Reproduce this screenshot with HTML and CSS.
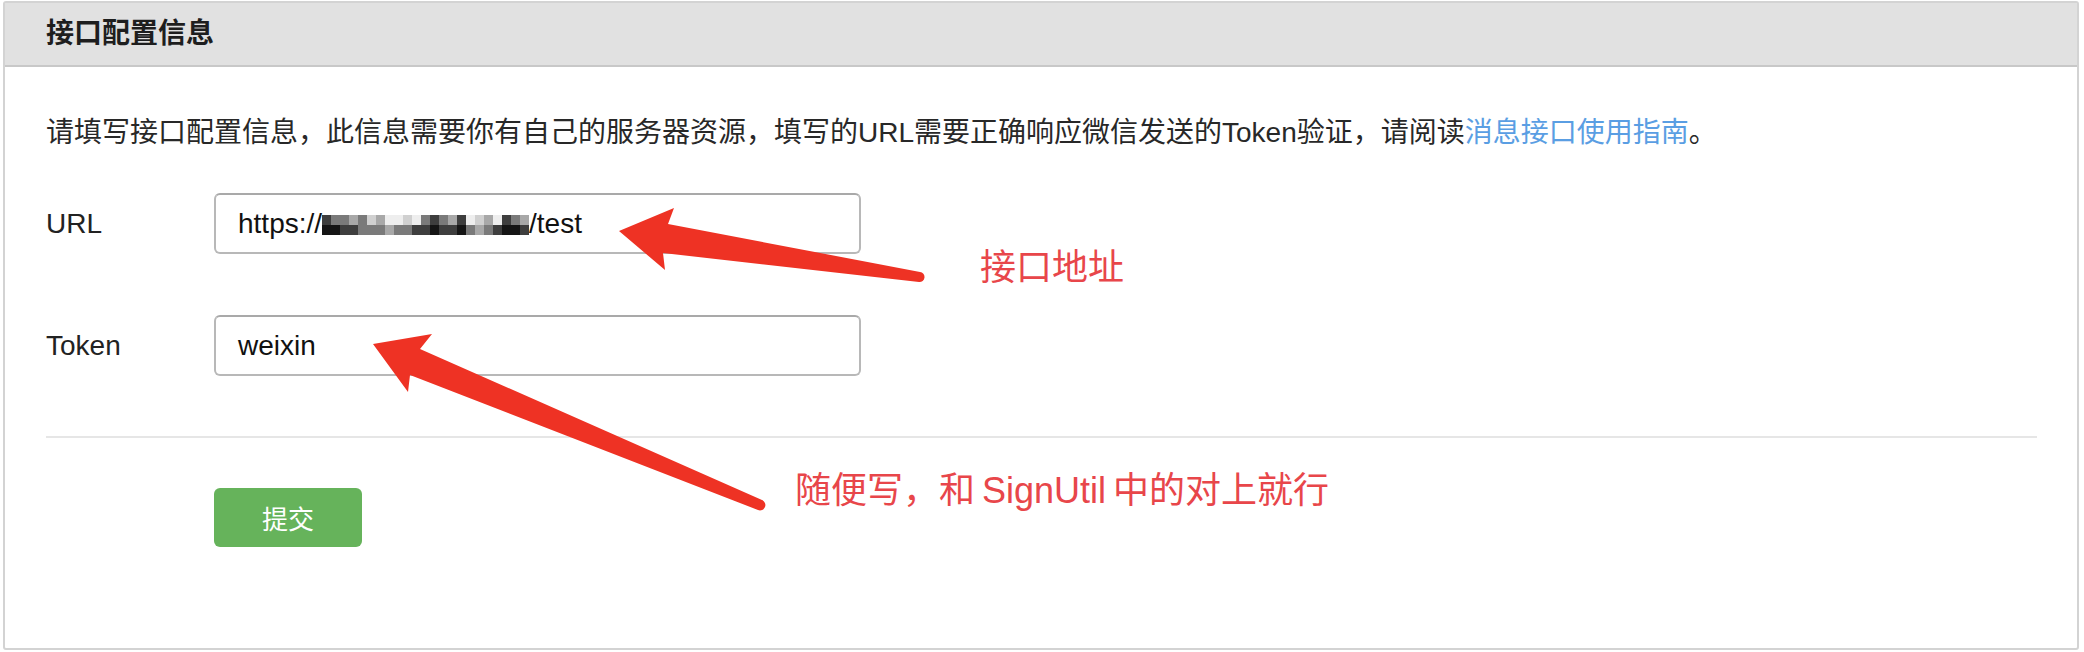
FILE: index.html
```html
<!DOCTYPE html>
<html lang="zh-CN">
<head>
<meta charset="utf-8">
<title>接口配置信息</title>
<link rel="stylesheet" href="styles.css">
</head>
<body>
<div class="panel">
  <div class="panel-head">
    <h2 class="title">接口配置信息</h2>
  </div>
  <div class="panel-body">
    <p class="desc">请填写接口配置信息，此信息需要你有自己的服务器资源，填写的URL需要正确响应微信发送的Token验证，请阅读<a class="link" href="#">消息接口使用指南</a>。</p>
    <div class="form-row">
      <label class="label">URL</label>
      <div class="input">https://<span class="mosaic"><span class="col"><i class="g4"></i><i class="g5"></i></span><span class="col"><i class="g3"></i><i class="g5"></i></span><span class="col"><i class="g3"></i><i class="g4"></i></span><span class="col"><i class="g2"></i><i class="g4"></i></span><span class="col"><i class="g3"></i><i class="g3"></i></span><span class="col"><i class="g1"></i><i class="g3"></i></span><span class="col"><i class="g2"></i><i class="g3"></i></span><span class="col"><i class="g0"></i><i class="g2"></i></span><span class="col"><i class="g0"></i><i class="g3"></i></span><span class="col"><i class="g1"></i><i class="g3"></i></span><span class="col"><i class="g0"></i><i class="g4"></i></span><span class="col"><i class="g3"></i><i class="g4"></i></span><span class="col"><i class="g4"></i><i class="g5"></i></span><span class="col"><i class="g3"></i><i class="g4"></i></span><span class="col"><i class="g2"></i><i class="g4"></i></span><span class="col"><i class="g4"></i><i class="g5"></i></span><span class="col"><i class="g0"></i><i class="g3"></i></span><span class="col"><i class="g1"></i><i class="g2"></i></span><span class="col"><i class="g2"></i><i class="g3"></i></span><span class="col"><i class="g0"></i><i class="g4"></i></span><span class="col"><i class="g4"></i><i class="g5"></i></span><span class="col"><i class="g3"></i><i class="g5"></i></span><span class="col"><i class="g2"></i><i class="g4"></i></span></span>/test</div>
    </div>
    <div class="form-row">
      <label class="label">Token</label>
      <div class="input">weixin</div>
    </div>
    <hr class="divider">
    <div class="actions">
      <button class="btn" type="button">提交</button>
    </div>
  </div>
</div>

<svg class="arrows" width="2084" height="652" viewBox="0 0 2084 652" xmlns="http://www.w3.org/2000/svg">
  <path class="arrow" d="M619,231 L674,208 L668,224 L920,272 A5,5 0 0 1 919,282 L663,253 L665,270 Z"/>
  <path class="arrow" d="M373,344 L432,334 L420,349 L762,500 A5,5 0 0 1 758,510 L410,375 L408,392 Z"/>
</svg>
<div class="note note-url">接口地址</div>
<div class="note note-token">随便写，和 SignUtil 中的对上就行</div>
</body>
</html>
```

FILE: styles.css
```css
* {
  box-sizing: border-box;
}

html, body {
  margin: 0;
  padding: 0;
  background: #ffffff;
}

body {
  width: 2084px;
  height: 652px;
  overflow: hidden;
  font-family: "Liberation Sans", "Noto Sans CJK SC", sans-serif;
  color: #222222;
}

.panel {
  margin: 1px 0 0 3px;
  width: 2076px;
  height: 649px;
  border: 2px solid #d3d3d3;
  border-radius: 3px;
  display: flex;
  flex-direction: column;
}

.panel-head {
  height: 64px;
  background: #e1e1e1;
  border-bottom: 2px solid #c8c8c8;
  padding-left: 41px;
  display: flex;
  align-items: center;
}

.title {
  margin: 0;
  font-size: 28px;
  font-weight: bold;
  color: #1e1e1e;
  line-height: 1;
}

.panel-body {
  flex: 1;
  padding: 46px 40px 0 41px;
  display: flex;
  flex-direction: column;
}

.desc {
  margin: 0;
  font-size: 28px;
  line-height: 40px;
  color: #282828;
  white-space: nowrap;
}

.link {
  color: #5a9ee3;
  text-decoration: none;
}

.form-row {
  display: flex;
  align-items: center;
  margin-top: 40px;
}

.form-row + .form-row {
  margin-top: 61px;
}

.label {
  width: 168px;
  font-size: 28px;
  color: #222222;
}

.input {
  width: 647px;
  height: 61px;
  border: 2px solid #b8b8b8;
  border-top-color: #a9a9a9;
  border-radius: 6px;
  padding-left: 22px;
  display: flex;
  align-items: center;
  font-size: 28px;
  color: #111111;
}

.mosaic {
  display: inline-flex;
  height: 20px;
  margin-top: 2px;
}

.mosaic .col {
  display: flex;
  flex-direction: column;
  width: 9px;
}

.mosaic i {
  display: block;
  height: 10px;
}

.g0 { background: #eeeeee; }
.g1 { background: #d0d0d0; }
.g2 { background: #a8a8a8; }
.g3 { background: #7a7a7a; }
.g4 { background: #3e3e3e; }
.g5 { background: #151515; }

.divider {
  margin: 60px 0 0 0;
  border: 0;
  height: 2px;
  background: #e6e6e6;
}

.actions {
  margin-top: 50px;
  padding-left: 168px;
}

.btn {
  width: 148px;
  height: 59px;
  border: 0;
  border-radius: 6px;
  background: #66b35b;
  color: #ffffff;
  font-family: "Liberation Sans", "Noto Sans CJK SC", sans-serif;
  font-size: 26px;
  padding: 0;
}

.arrows {
  position: absolute;
  top: 0;
  left: 0;
  pointer-events: none;
}

.arrow {
  fill: #ee3224;
}

.note {
  position: absolute;
  font-size: 36px;
  line-height: 1;
  color: #e8464a;
  white-space: nowrap;
}

.note-url {
  left: 980px;
  top: 250px;
}

.note-token {
  left: 795px;
  top: 473px;
  word-spacing: -3px;
}
```
